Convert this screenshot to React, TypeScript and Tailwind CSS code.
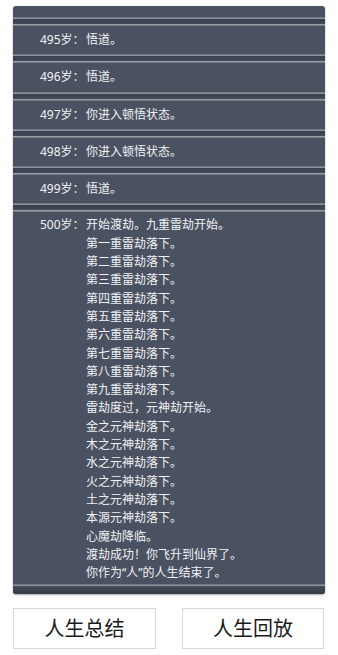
import React from "react";

const Sep = () => (
  <div className="flex flex-col shrink-0">
    <div className="h-px bg-[#727883]" />
    <div className="h-px bg-[#8f949c]" />
    <div className="h-[5px] bg-gradient-to-b from-[#383e4a] to-[#444b58]" />
    <div className="h-px bg-[#979ca4]" />
    <div className="h-px bg-[#767c86]" />
  </div>
);

const rows: [string, string][] = [
  ["495岁：", "悟道。"],
  ["496岁：", "悟道。"],
  ["497岁：", "你进入顿悟状态。"],
  ["498岁：", "你进入顿悟状态。"],
  ["499岁：", "悟道。"],
];

const last = [
  "开始渡劫。九重雷劫开始。",
  "第一重雷劫落下。",
  "第二重雷劫落下。",
  "第三重雷劫落下。",
  "第四重雷劫落下。",
  "第五重雷劫落下。",
  "第六重雷劫落下。",
  "第七重雷劫落下。",
  "第八重雷劫落下。",
  "第九重雷劫落下。",
  "雷劫度过，元神劫开始。",
  "金之元神劫落下。",
  "木之元神劫落下。",
  "水之元神劫落下。",
  "火之元神劫落下。",
  "土之元神劫落下。",
  "本源元神劫落下。",
  "心魔劫降临。",
  "渡劫成功！你飞升到仙界了。",
  "你作为“人”的人生结束了。",
];

const font = { fontFamily: '"Noto Sans", "Noto Sans CJK SC", sans-serif' };

export default function App() {
  return (
    <div
      className="w-[338px] h-[655px] bg-white pt-[6px] px-[13px] flex flex-col"
      style={font}
    >
      <div className="h-[588px] rounded-[3px] overflow-hidden bg-[#4a5161] flex flex-col shadow-[0_1px_2px_rgba(0,0,0,0.35)] text-[12px] leading-[18.3px] text-[#f0f2f5]">
        <div className="h-[11px] shrink-0" />
        {rows.map(([a, b], i) => (
          <React.Fragment key={i}>
            <Sep />
            <div className="flex pl-[27px] py-[5px] shrink-0">
              <span className="w-[46px] shrink-0">{a}</span>
              <span>{b}</span>
            </div>
          </React.Fragment>
        ))}
        <Sep />
        <div className="flex pl-[27px] pt-[4px] shrink-0">
          <span className="w-[46px] shrink-0">500岁：</span>
          <div className="flex flex-col">
            {last.map((l, i) => (
              <span key={i}>{l}</span>
            ))}
          </div>
        </div>
        <div className="flex-1" />
        <div className="flex flex-col shrink-0">
          <div className="h-px bg-[#737983]" />
          <div className="h-px bg-[#8e939b]" />
          <div className="h-[8px] bg-gradient-to-b from-[#454b59] to-[#363c47]" />
        </div>
      </div>
      <div className="flex gap-[26px] mt-[14px]">
        <button className="w-[143px] h-[41px] border border-[#d8d8d8] bg-white text-[20px] text-[#1a1a1a] flex items-center justify-center">
          人生总结
        </button>
        <button className="w-[142px] h-[41px] border border-[#d8d8d8] bg-white text-[20px] text-[#1a1a1a] flex items-center justify-center">
          人生回放
        </button>
      </div>
    </div>
  );
}
